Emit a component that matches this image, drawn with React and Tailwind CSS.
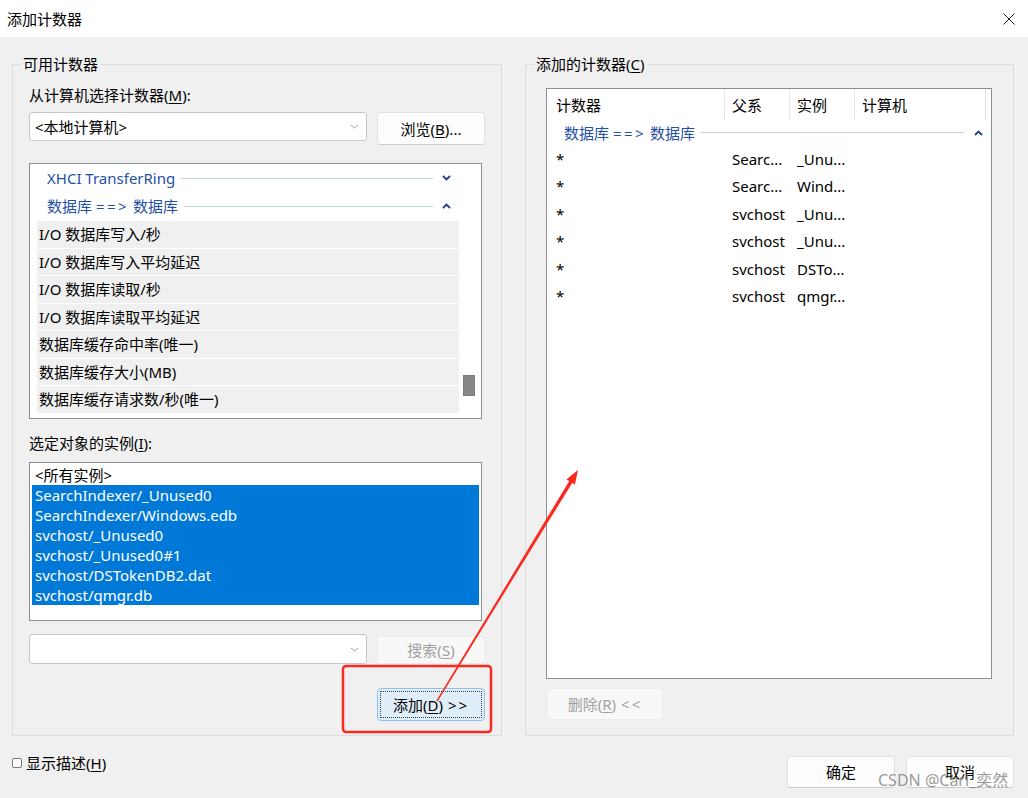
import React from 'react';

const U = ({ children }) => <span className="underline underline-offset-[2px] decoration-1">{children}</span>;

const Chevron = ({ up }) => (
  <svg width="9" height="6" viewBox="0 0 9 6">
    <path d={up ? 'M1 5 L4.5 1.5 L8 5' : 'M1 1 L4.5 4.5 L8 1'} fill="none" stroke="#1f3f8f" strokeWidth="1.8" />
  </svg>
);

const ComboArrow = () => (
  <svg width="9" height="5" viewBox="0 0 9 5">
    <path d="M1 1 L4.5 4 L8 1" fill="none" stroke="#a0a0a0" strokeWidth="1" />
  </svg>
);

const counters = [
  'I/O 数据库写入/秒',
  'I/O 数据库写入平均延迟',
  'I/O 数据库读取/秒',
  'I/O 数据库读取平均延迟',
  '数据库缓存命中率(唯一)',
  '数据库缓存大小(MB)',
  '数据库缓存请求数/秒(唯一)',
];

const instances = [
  'SearchIndexer/_Unused0',
  'SearchIndexer/Windows.edb',
  'svchost/_Unused0',
  'svchost/_Unused0#1',
  'svchost/DSTokenDB2.dat',
  'svchost/qmgr.db',
];

const added = [
  ['Searc...', '_Unu...'],
  ['Searc...', 'Wind...'],
  ['svchost', '_Unu...'],
  ['svchost', '_Unu...'],
  ['svchost', 'DSTo...'],
  ['svchost', 'qmgr...'],
];

const DbLabel = () => (
  <span className="whitespace-nowrap">
    数据库 <span className="tracking-[2.5px]">==&gt;</span> 数据库
  </span>
);

const GroupHeader = ({ label, up, pl, h }) => (
  <div className={`flex items-center text-[#1f50a6] ${pl} ${h}`}>
    <span className="whitespace-nowrap">{label}</span>
    <div className="flex-1 h-px bg-[#c3d3ee] ml-[6px]" />
    <div className="w-[26px] flex justify-center">
      <Chevron up={up} />
    </div>
  </div>
);

const Combo = ({ text, h }) => (
  <div className={`w-[338px] ${h} bg-white border border-[#c8c8c8] rounded-[3px] flex items-center justify-between pl-[5px] pr-[7px]`}>
    <span>{text}</span>
    <ComboArrow />
  </div>
);

export default function App() {
  return (
    <div className="relative w-[1028px] h-[798px] overflow-hidden bg-[#f0f0f0] text-black text-[15px] leading-[20px] font-['Noto_Sans','Noto_Sans_CJK_SC',sans-serif]">
      {/* title bar */}
      <div className="h-[37px] bg-white flex items-center justify-between pl-[7px] pr-[13px]">
        <span>添加计数器</span>
        <svg width="12" height="12" viewBox="0 0 12 12">
          <path d="M0.5 0.5 L11.5 11.5 M11.5 0.5 L0.5 11.5" stroke="#1a1a1a" strokeWidth="1" />
        </svg>
      </div>

      <div className="pl-[12px] pr-[14px] pt-[17px]">
        <div className="flex gap-[23px]">
          {/* available counters */}
          <fieldset className="w-[490px] h-[682px] border border-[#dddddd] p-0 m-0">
            <legend className="ml-[8px] px-[2px]">可用计数器</legend>
            <div className="pl-[16px]">
              <div className="mt-[11px]">从计算机选择计数器(<U>M</U>):</div>
              <div className="mt-[7px] flex items-start gap-[10px]">
                <Combo text="<本地计算机>" h="h-[29px]" />
                <div className="w-[108px] h-[33px] bg-[#fdfdfd] border border-[#e1e1e1] border-b-[#cccccc] rounded-[4px] flex items-center justify-center">
                  浏览(<U>B</U>)...
                </div>
              </div>

              <div className="mt-[18px] w-[453px] h-[256px] border border-[#8a8f97] bg-white flex">
                <div className="w-[429px] pl-[7px]">
                  <GroupHeader label="XHCI TransferRing" pl="pl-[10px]" h="h-[28px]" />
                  <GroupHeader label={<DbLabel />} up pl="pl-[10px]" h="h-[28px]" />
                  {counters.map((c) => (
                    <div key={c} className="mt-px h-[26.5px] bg-[#f0f0f0] pl-[2px] flex items-center">
                      {c}
                    </div>
                  ))}
                </div>
                <div className="flex-1 pt-[211px] pl-[4px]">
                  <div className="w-[12px] h-[21px] bg-[#878787] border border-[#7a7a7a]" />
                </div>
              </div>

              <div className="mt-[14px]">选定对象的实例(<U>I</U>):</div>
              <div className="mt-[9px] w-[453px] h-[159px] border border-[#8a8f97] bg-white p-[2px]">
                <div className="h-[20px] pl-[3px]">&lt;所有实例&gt;</div>
                {instances.map((i) => (
                  <div key={i} className="h-[20px] pl-[3px] bg-[#0078d7] text-white">
                    {i}
                  </div>
                ))}
              </div>

              <div className="mt-[13px] flex items-start gap-[10px]">
                <Combo text="" h="h-[30px]" />
                <div className="mt-[2px] w-[108px] h-[28px] bg-[#f8f8f8] border border-[#ececec] rounded-[4px] flex items-center justify-center text-[#a0a0a0]">
                  搜索(<U>S</U>)
                </div>
              </div>

              <div className="w-[456px] flex justify-end mt-[24px]">
                <div className="w-[108px] h-[33px] bg-[#e0eef9] border-[1.5px] border-[#8fc3ef] rounded-[4px] outline-1 outline-dotted outline-[#3a3a3a] -outline-offset-4 flex items-center justify-center">
                  添加(<U>D</U>)<span className="ml-[5px] tracking-[2px]">&gt;&gt;</span>
                </div>
              </div>
            </div>
          </fieldset>

          {/* added counters */}
          <fieldset className="w-[489px] h-[682px] border border-[#dddddd] p-0 m-0">
            <legend className="ml-[8px] px-[2px]">添加的计数器(<U>C</U>)</legend>
            <div className="pl-[20px]">
              <div className="mt-[14px] w-[446px] h-[591px] border border-[#8a8f97] bg-white">
                <div className="h-[31px] flex">
                  <div className="w-[178px] border-r border-[#e6e6e6] pl-[9px] flex items-center">计数器</div>
                  <div className="w-[65px] border-r border-[#e6e6e6] pl-[7px] flex items-center">父系</div>
                  <div className="w-[65px] border-r border-[#e6e6e6] pl-[7px] flex items-center">实例</div>
                  <div className="w-[131px] border-r border-[#e6e6e6] pl-[7px] flex items-center">计算机</div>
                </div>
                <GroupHeader label={<DbLabel />} up pl="pl-[17px]" h="h-[25px]" />
                {added.map(([p, i], n) => (
                  <div key={n} className="h-[27.5px] flex items-center">
                    <div className="w-[178px] pl-[9px]">*</div>
                    <div className="w-[65px] pl-[7px] whitespace-nowrap">{p}</div>
                    <div className="w-[65px] pl-[7px] whitespace-nowrap">{i}</div>
                  </div>
                ))}
              </div>
              <div className="mt-[9px] ml-px w-[116px] h-[32px] bg-[#f8f8f8] border border-[#ececec] rounded-[4px] flex items-center justify-center text-[#a0a0a0]">
                删除(<U>R</U>)<span className="ml-[5px] tracking-[2px]">&lt;&lt;</span>
              </div>
            </div>
          </fieldset>
        </div>

        {/* bottom */}
        <div className="flex items-start justify-between">
          <div className="mt-[17px] flex items-center">
            <div className="w-[10px] h-[10px] bg-white border border-[#7a7a7a] rounded-[2px]" />
            <span className="ml-[4px]">显示描述(<U>H</U>)</span>
          </div>
          <div className="mt-[20px] flex gap-[11px]">
            <div className="w-[108px] h-[32px] bg-[#fdfdfd] border border-[#e1e1e1] border-b-[#cccccc] rounded-[4px] flex items-center justify-center">确定</div>
            <div className="w-[108px] h-[32px] bg-[#fdfdfd] border border-[#e1e1e1] border-b-[#cccccc] rounded-[4px] flex items-center justify-center">取消</div>
          </div>
        </div>
      </div>

      {/* watermark */}
      <span className="absolute left-[878px] top-[770px] text-[16px] text-[#7f7f7f]/80 whitespace-nowrap">CSDN @Carl_奕然</span>

      {/* red annotation */}
      <svg className="absolute inset-0 pointer-events-none" width="1028" height="798" viewBox="0 0 1028 798">
        <rect x="343" y="666" width="148" height="66" rx="3" fill="none" stroke="#fa2a1e" strokeWidth="2.5" />
        <polygon
          points="436.4,700.6 437.6,701.4 572.2,482.9 574.97,484.6 578,470 566.4,479.4 569.2,481.1"
          fill="#fa2a1e"
        />
      </svg>
    </div>
  );
}
